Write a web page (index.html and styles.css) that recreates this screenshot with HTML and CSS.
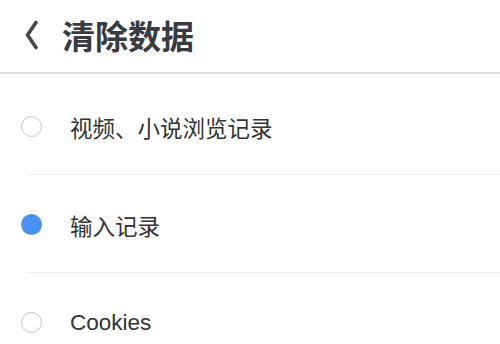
FILE: index.html
```html
<!DOCTYPE html>
<html lang="zh-CN">
<head>
<meta charset="utf-8">
<title>清除数据</title>
<link rel="stylesheet" href="styles.css">
</head>
<body>
<div class="page">
  <header class="topbar">
    <span class="back">
      <svg width="14" height="30" viewBox="0 0 14 30"><path d="M12 2.5 L3.5 15 L12 27.5" fill="none" stroke="#45484d" stroke-width="3.6" stroke-linecap="round" stroke-linejoin="round"/></svg>
    </span>
    <h1 class="title">清除数据</h1>
  </header>
  <ul class="list">
    <li class="row"><span class="radio"></span><span class="label">视频、小说浏览记录</span></li>
    <li class="row"><span class="radio checked"></span><span class="label">输入记录</span></li>
    <li class="row"><span class="radio"></span><span class="label">Cookies</span></li>
  </ul>
</div>
</body>
</html>
```

FILE: styles.css
```css
* { box-sizing: border-box; }
html, body {
  margin: 0;
  padding: 0;
  background: #ffffff;
}
body {
  font-family: "Liberation Sans", "Noto Sans CJK SC", sans-serif;
}
.page {
  width: 500px;
  height: 344px;
  overflow: hidden;
  display: flex;
  flex-direction: column;
}
.topbar {
  height: 74px;
  flex: none;
  display: flex;
  align-items: center;
  padding: 0 0 3px 24px;
  border-bottom: 2px solid #e0e0e0;
}
.back {
  display: flex;
  width: 38px;
}
.title {
  margin: 0;
  font-size: 33px;
  font-weight: 700;
  color: #383b42;
}
.list {
  list-style: none;
  margin: 0;
  padding: 2px 0 0 0;
}
.row {
  height: 98px;
  display: flex;
  align-items: center;
  padding-left: 21px;
  padding-top: 3px;
  position: relative;
}
.row + .row::before {
  content: "";
  position: absolute;
  left: 27px;
  right: 0;
  top: 0;
  height: 1px;
  background: #ececec;
}
.radio {
  width: 21px;
  height: 21px;
  border-radius: 50%;
  border: 1.7px solid #c6c6c6;
  flex: none;
}
.radio.checked {
  border: none;
  background: #4a90f5;
}
.label {
  margin-left: 28px;
  font-size: 22.5px;
  color: #333333;
}
```
